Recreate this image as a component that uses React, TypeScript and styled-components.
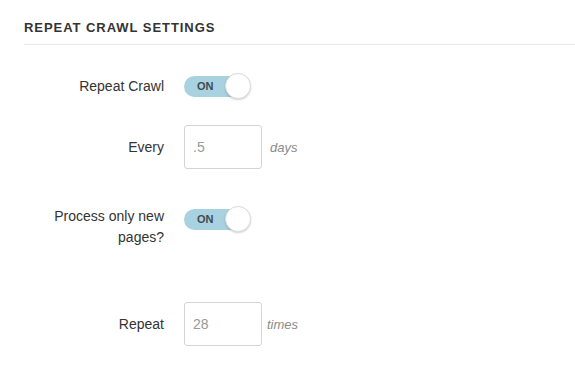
import React from "react";
import styled, { createGlobalStyle } from "styled-components";

const Global = createGlobalStyle`
  html, body { margin: 0; padding: 0; background: #fff; }
  body { font-family: "Liberation Sans", Arial, sans-serif; color: #333; }
`;

const Page = styled.div`
  padding-left: 24px;
  width: 551px;
`;

const Header = styled.h2`
  margin: 0;
  padding: 20px 0 8px;
  font-size: 13px;
  line-height: 16px;
  font-weight: bold;
  letter-spacing: 0.95px;
  color: #333;
  border-bottom: 1px solid #e8e8e8;
`;

const Form = styled.div`
  display: flex;
  flex-direction: column;
  padding-left: 10px;
`;

const Row = styled.div<{ $top: number; $align?: string }>`
  display: flex;
  align-items: ${(p) => p.$align ?? "center"};
  gap: 20px;
  margin-top: ${(p) => p.$top}px;
`;

const Label = styled.label`
  width: 130px;
  flex: none;
  text-align: right;
  font-size: 14px;
  line-height: 21px;
  color: #333;
`;

const Toggle = styled.span`
  position: relative;
  display: flex;
  align-items: center;
  width: 67px;
  height: 26px;
`;

const Track = styled.span`
  display: flex;
  align-items: center;
  width: 62px;
  height: 21px;
  border-radius: 11px;
  background: #a8d2df;
  padding-left: 13px;
  box-sizing: border-box;
  font-size: 11px;
  font-weight: bold;
  color: #3f4b50;
`;

const Knob = styled.span`
  position: absolute;
  right: 0;
  top: 0;
  width: 26px;
  height: 26px;
  box-sizing: border-box;
  border-radius: 50%;
  background: #fff;
  border: 1px solid #dcdcdc;
  box-shadow: 0 1px 2px rgba(0, 0, 0, 0.18);
`;

const Field = styled.div`
  display: flex;
  align-items: center;
`;

const Input = styled.div`
  width: 78px;
  height: 44px;
  box-sizing: border-box;
  border: 1px solid #d4d4d4;
  border-radius: 3px;
  padding-left: 8px;
  display: flex;
  align-items: center;
  font-size: 14px;
  color: #999;
`;

const Suffix = styled.span<{ $gap: number }>`
  margin-left: ${(p) => p.$gap}px;
  font-size: 13px;
  font-style: italic;
  color: #8a8a8a;
`;

function Switch() {
  return (
    <Toggle>
      <Track>ON</Track>
      <Knob />
    </Toggle>
  );
}

export default function App() {
  return (
    <>
      <Global />
      <Page>
        <Header>REPEAT CRAWL SETTINGS</Header>
        <Form>
          <Row $top={28}>
            <Label>Repeat Crawl</Label>
            <Switch />
          </Row>
          <Row $top={26}>
            <Label>Every</Label>
            <Field>
              <Input>.5</Input>
              <Suffix $gap={8}>days</Suffix>
            </Field>
          </Row>
          <Row $top={37} $align="flex-start">
            <Label>Process only new pages?</Label>
            <Switch />
          </Row>
          <Row $top={54}>
            <Label>Repeat</Label>
            <Field>
              <Input>28</Input>
              <Suffix $gap={5}>times</Suffix>
            </Field>
          </Row>
        </Form>
      </Page>
    </>
  );
}
